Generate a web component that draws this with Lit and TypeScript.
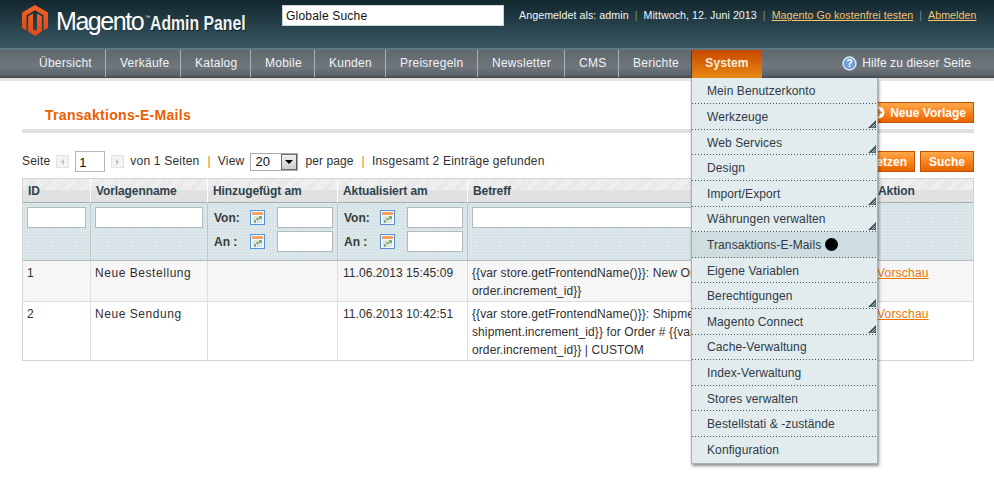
import { LitElement, html, css, svg } from "lit";
import { customElement } from "lit/decorators.js";

const NAV = [
  { label: "Übersicht", width: 81 },
  { label: "Verkäufe", width: 75 },
  { label: "Katalog", width: 70 },
  { label: "Mobile", width: 64 },
  { label: "Kunden", width: 71 },
  { label: "Preisregeln", width: 92 },
  { label: "Newsletter", width: 87 },
  { label: "CMS", width: 54 },
  { label: "Berichte", width: 73 },
];

const MENU = [
  { label: "Mein Benutzerkonto" },
  { label: "Werkzeuge", sub: true },
  { label: "Web Services", sub: true },
  { label: "Design" },
  { label: "Import/Export", sub: true },
  { label: "Währungen verwalten", sub: true },
  { label: "Transaktions-E-Mails", active: true },
  { label: "Eigene Variablen" },
  { label: "Berechtigungen", sub: true },
  { label: "Magento Connect", sub: true },
  { label: "Cache-Verwaltung" },
  { label: "Index-Verwaltung" },
  { label: "Stores verwalten" },
  { label: "Bestellstati & -zustände" },
  { label: "Konfiguration" },
];

const calendarIcon = html`<svg class="cal" width="15" height="15" viewBox="0 0 15 15">
  <rect x=".5" y=".5" width="14" height="14" fill="#f4f7fb" stroke="#5a8fd6" />
  <rect x="2" y="2" width="11" height="3" fill="#f4a25c" />
  <rect x="3" y="6" width="9" height="7" fill="#dfe3e3" />
  <rect x="9" y="6" width="3" height="3" fill="#7fae6c" />
  <rect x="6" y="8" width="3" height="2" fill="#8fb87c" />
  <rect x="4" y="10" width="2" height="3" fill="#7fae6c" />
</svg>`;

const subArrow = svg`<polygon points="8,0 8,8 0,8" fill="#3e5158" />
  <path d="M3.5 7.5 L7.5 3.5 M5.5 7.5 L7.5 5.5" stroke="#d5dfe2" stroke-width=".8" />`;

@customElement("app-root")
export class AppRoot extends LitElement {
  static styles = css`
    :host {
      display: block;
      font: 12px/18px "Liberation Sans", Arial, sans-serif;
      letter-spacing: 0.2px;
      color: #2f2f2f;
      background: #fff;
      min-height: 483px;
    }

    .header {
      height: 48px;
      display: flex;
      background: linear-gradient(#12272e, #395864);
      border-bottom: 2px solid #5f7781;
    }
    .logo {
      display: flex;
      align-items: flex-start;
      width: 282px;
      padding: 5px 0 0 22px;
      box-sizing: border-box;
      color: #fff;
      white-space: nowrap;
      letter-spacing: 0;
    }
    .logo svg {
      flex: none;
    }
    .logo .word {
      font-size: 25px;
      line-height: 30px;
      letter-spacing: -1.45px;
      margin-left: 8px;
      margin-top: 1px;
    }
    .logo sup {
      font-size: 5px;
      line-height: 7px;
      margin: 9px 0 0 2px;
    }
    .logo .panel {
      font-weight: bold;
      font-size: 20px;
      line-height: 24px;
      margin: 6px 0 0 0;
      color: #eef2f3;
      text-shadow: 1px 1px 1px #0d1d22;
      transform: scaleX(0.79);
      transform-origin: left center;
    }
    .search {
      width: 222px;
      height: 21px;
      margin-top: 5px;
      background: #fff;
      border: 1px solid #c9d3d6;
      box-sizing: border-box;
      padding-left: 3px;
      font-size: 12px;
      line-height: 20px;
      color: #111;
    }
    .user {
      display: flex;
      margin: 6px 0 0 15px;
      color: #f1f5f6;
      white-space: nowrap;
      font-size: 10.67px;
      letter-spacing: 0.06px;
    }
    .user i {
      font-style: normal;
      color: #7b9099;
      margin: 0 6px;
    }
    .user a {
      color: #f5c26e;
      text-decoration: underline;
    }

    .nav {
      height: 28px;
      display: flex;
      padding-left: 25px;
      background: linear-gradient(#5f686e, #6f767c 60%, #5c656b 88%, #3e474d);
      border-bottom: 3px solid #e4e4e4;
      color: #f0f4f6;
      line-height: 27px;
      position: relative;
      letter-spacing: 0.25px;
    }
    .nav-item {
      padding-left: 14px;
      height: 27px;
      box-sizing: border-box;
      border-right: 1px solid #a8aeb2;
      white-space: nowrap;
    }
    .nav-item.last {
      border-right-color: #394046;
    }
    .nav-system {
      position: relative;
      width: 70px;
      height: 28px;
      box-sizing: border-box;
      text-align: center;
      font-weight: bold;
      letter-spacing: 0.1px;
      color: #fbeedd;
      background: linear-gradient(#c74700, #e88a14);
    }
    .help {
      margin-left: auto;
      display: flex;
      align-items: center;
      gap: 5px;
      padding-right: 23px;
      height: 27px;
      letter-spacing: 0.1px;
    }

    .menu {
      position: absolute;
      left: -1px;
      top: 28px;
      width: 187px;
      box-sizing: border-box;
      background: #e2ebee;
      border: 1px solid #a9b0b3;
      border-top: 0;
      box-shadow: 1px 2px 3px rgba(0, 0, 0, 0.45);
      z-index: 5;
      text-align: left;
      font-weight: normal;
      color: #2f3a44;
      padding-top: 0.6px;
    }
    .menu-item {
      height: 25.6px;
      box-sizing: border-box;
      padding-left: 15px;
      line-height: 24px;
      position: relative;
      display: flex;
      align-items: center;
      gap: 4px;
      background-image: linear-gradient(90deg, #49555a 1px, transparent 1px);
      background-size: 3px 1px;
      background-repeat: repeat-x;
      background-position: left bottom;
    }
    .menu-item:last-child {
      background-image: none;
    }
    .menu-item.active {
      background-color: #cedde0;
    }
    .menu-item svg {
      position: absolute;
      right: 1px;
      bottom: 2px;
    }
    .dot {
      width: 13px;
      height: 13px;
      border-radius: 50%;
      background: #000;
    }

    .content {
      padding: 21px 20px 0 22px;
    }
    .title-row {
      display: flex;
      justify-content: space-between;
      height: 21px;
    }
    .title {
      align-self: flex-end;
      margin: 0 0 -1px 23px;
      font-size: 14px;
      line-height: 18px;
      font-weight: bold;
      letter-spacing: 0.3px;
      color: #eb5e00;
    }
    .btn {
      height: 21px;
      box-sizing: border-box;
      display: flex;
      align-items: center;
      gap: 5px;
      padding: 0 7px;
      border: 1px solid #c25400;
      background: linear-gradient(#ffa84a, #f9801b 55%, #e76500);
      color: #fff;
      font-weight: bold;
      letter-spacing: 0;
      white-space: nowrap;
    }
    .bar {
      height: 4px;
      margin-top: 6px;
      background: #dfdfdf;
    }
    .pager {
      display: flex;
      align-items: center;
      height: 21px;
      margin-top: 18px;
      white-space: nowrap;
    }
    .pager .t {
      margin-bottom: 2px;
    }
    .pg-btn {
      width: 13px;
      height: 13px;
      box-sizing: border-box;
      border: 1px solid #e2e2e2;
      background: #f3f3f3;
      display: flex;
      align-items: center;
      justify-content: center;
    }
    .pg-btn::after {
      content: "";
      border: 3px solid transparent;
    }
    .pg-btn.prev {
      margin-left: 6px;
    }
    .pg-btn.prev::after {
      border-right-color: #c2c2c2;
      border-left-width: 0;
    }
    .pg-btn.next {
      margin-left: 6px;
    }
    .pg-btn.next::after {
      border-left-color: #c2c2c2;
      border-right-width: 0;
    }
    .pg-input {
      width: 30px;
      height: 21px;
      box-sizing: border-box;
      margin-left: 6px;
      padding-left: 3px;
      border: 1px solid #b6b6b6;
      font-size: 13px;
      line-height: 21px;
      color: #111;
    }
    .pg-total {
      margin-left: 6px;
    }
    .pager .sep {
      color: #c5822d;
      margin: 0 7px 2px 8px;
    }
    .select {
      width: 48px;
      height: 18px;
      box-sizing: border-box;
      margin: 0 7px 0 6px;
      border: 1px solid #a9a9a9;
      display: flex;
      justify-content: space-between;
      align-items: center;
      padding-left: 4px;
      font-size: 13px;
      color: #111;
    }
    .select b {
      width: 16px;
      height: 16px;
      box-sizing: border-box;
      border: 1px solid #707070;
      border-right-color: #555;
      background: linear-gradient(#eee, #cfcfcf);
      display: flex;
      align-items: center;
      justify-content: center;
    }
    .select b::after {
      content: "";
      border: 4px solid transparent;
      border-top-color: #000;
      border-bottom-width: 0;
    }
    .per-page {
      letter-spacing: 0.1px;
    }
    .pager .reset {
      margin-left: auto;
    }
    .pager .go {
      margin-left: 5px;
      padding: 0 8px;
    }

    table {
      width: 952px;
      margin-top: 6px;
      border-collapse: separate;
      border-spacing: 0;
      table-layout: fixed;
      border: 1px solid #cfd5d6;
    }
    th {
      height: 23px;
      padding: 0 5px;
      text-align: left;
      color: #2d444f;
      font-size: 12px;
      letter-spacing: -0.1px;
      border-right: 1px solid #fff;
      border-bottom: 1px solid #a8adae;
      background:
        linear-gradient(transparent 11px, #e1e1e1 11px),
        repeating-linear-gradient(135deg, #f3f3f3 0 1px, #e4e4e4 1px 2px);
      white-space: nowrap;
    }
    .filters td {
      height: 58px;
      padding: 4px;
      vertical-align: top;
      box-sizing: border-box;
      border-right: 1px solid #bcc8ca;
      border-bottom: 1px solid #b5bfc1;
      background-color: #d4e2e5;
      background-image: linear-gradient(#dce8ea 1px, transparent 1px), linear-gradient(90deg, #dce8ea 1px, transparent 1px);
      background-size: 3px 3px;
    }
    .field {
      height: 21px;
      box-sizing: border-box;
      background: #fff;
      border: 1px solid #b3babb;
    }
    .range {
      display: grid;
      grid-template-columns: 36px 27px 56px;
      row-gap: 3px;
      align-items: center;
      font-weight: bold;
      letter-spacing: 0;
      padding-left: 2px;
      color: #39393a;
    }
    .cal {
      display: block;
    }
    tbody td {
      padding: 3px 4px 1px;
      vertical-align: top;
      border-right: 1px solid #dadfe0;
      border-bottom: 1px solid #dadfe0;
      white-space: nowrap;
      overflow: hidden;
    }
    tbody tr:last-child td {
      border-bottom: 0;
    }
    td.name {
      letter-spacing: 0.55px;
    }
    td.date {
      padding-left: 5px;
      letter-spacing: 0.05px;
    }
    td.subject {
      letter-spacing: 0.1px;
    }
    tr.odd td {
      background: #f6f6f6;
    }
    td a {
      color: #ea7601;
      text-decoration: underline;
    }
    td:last-child, th:last-child {
      border-right: 0;
    }
  `;

  render() {
    return html`
      <div class="header">
        <div class="logo">
          <svg width="26" height="31" viewBox="0 0 26 31">
            <defs>
              <linearGradient id="lg" x1="0" y1="0" x2="0" y2="1">
                <stop offset="0" stop-color="#f26322" />
                <stop offset="1" stop-color="#e2481a" />
              </linearGradient>
            </defs>
            <polygon points="13,0 26,7.5 26,23 21.5,25.6 21.5,10.2 13,5.2 4.5,10.2 4.5,25.6 0,23 0,7.5" fill="url(#lg)" />
            <polygon points="6.2,11.2 11,8.4 11,24.5 13,25.8 15,24.5 15,8.4 19.8,11.2 19.8,26.6 13,31 6.2,26.6" fill="url(#lg)" />
          </svg>
          <span class="word">Magento</span><sup>™</sup>
          <span class="panel">Admin Panel</span>
        </div>
        <div class="search">Globale Suche</div>
        <div class="user">
          <span>Angemeldet als: admin</span><i>|</i><span>Mittwoch, 12. Juni 2013</span><i>|</i>
          <a>Magento Go kostenfrei testen</a><i>|</i><a>Abmelden</a>
        </div>
      </div>

      <div class="nav">
        ${NAV.map(
          (n, i) => html`<div class="nav-item ${i === NAV.length - 1 ? "last" : ""}" style="width:${n.width}px">${n.label}</div>`
        )}
        <div class="nav-system">
          System
          <div class="menu">
            ${MENU.map(
              (m) => html`<div class="menu-item ${m.active ? "active" : ""}">
                ${m.label}
                ${m.active ? html`<span class="dot"></span>` : ""}
                ${m.sub ? html`<svg width="8" height="8" viewBox="0 0 8 8">${subArrow}</svg>` : ""}
              </div>`
            )}
          </div>
        </div>
        <div class="help">
          <svg width="15" height="15" viewBox="0 0 15 15">
            <circle cx="7.5" cy="7.5" r="6.5" fill="#6f9fd6" stroke="#dbe7f3" stroke-width="1.4" />
            <text x="7.5" y="11" text-anchor="middle" font-size="10" font-weight="bold" fill="#fff" font-family="Liberation Sans">?</text>
          </svg>
          Hilfe zu dieser Seite
        </div>
      </div>

      <div class="content">
        <div class="title-row">
          <h3 class="title">Transaktions-E-Mails</h3>
          <div class="btn">
            <svg width="13" height="13" viewBox="0 0 13 13">
              <circle cx="6.5" cy="6.5" r="6" fill="#fff" />
              <path d="M6.5 3 V10 M3 6.5 H10" stroke="#ee7a14" stroke-width="2" />
            </svg>
            Neue Vorlage
          </div>
        </div>
        <div class="bar"></div>

        <div class="pager">
          <span class="t">Seite</span>
          <span class="pg-btn prev"></span>
          <span class="pg-input">1</span>
          <span class="pg-btn next"></span>
          <span class="t pg-total">von 1 Seiten</span>
          <span class="sep">|</span>
          <span class="t">View</span>
          <span class="select">20<b></b></span>
          <span class="t per-page">per page</span>
          <span class="sep">|</span>
          <span class="t">Insgesamt 2 Einträge gefunden</span>
          <div class="btn reset">Filter zurücksetzen</div>
          <div class="btn go">Suche</div>
        </div>

        <table>
          <colgroup>
            <col style="width:68px" />
            <col style="width:117px" />
            <col style="width:130px" />
            <col style="width:130px" />
            <col style="width:405px" />
            <col />
          </colgroup>
          <thead>
            <tr>
              <th>ID</th>
              <th>Vorlagenname</th>
              <th>Hinzugefügt am</th>
              <th>Aktualisiert am</th>
              <th>Betreff</th>
              <th>Aktion</th>
            </tr>
          </thead>
          <tbody>
            <tr class="filters">
              <td><div class="field"></div></td>
              <td><div class="field"></div></td>
              <td>${this.range()}</td>
              <td>${this.range()}</td>
              <td><div class="field"></div></td>
              <td></td>
            </tr>
            <tr class="odd">
              <td>1</td>
              <td class="name">Neue Bestellung</td>
              <td></td>
              <td class="date">11.06.2013 15:45:09</td>
              <td class="subject">{{var store.getFrontendName()}}: New Order # {{var<br />order.increment_id}}</td>
              <td><a>Vorschau</a></td>
            </tr>
            <tr>
              <td>2</td>
              <td class="name">Neue Sendung</td>
              <td></td>
              <td class="date">11.06.2013 10:42:51</td>
              <td class="subject">
                {{var store.getFrontendName()}}: Shipment # {{var<br />shipment.increment_id}} for Order # {{var<br />order.increment_id}} | CUSTOM
              </td>
              <td><a>Vorschau</a></td>
            </tr>
          </tbody>
        </table>
      </div>
    `;
  }

  range() {
    return html`<div class="range">
      <span>Von:</span>${calendarIcon}<div class="field"></div>
      <span>An :</span>${calendarIcon}<div class="field"></div>
    </div>`;
  }
}
